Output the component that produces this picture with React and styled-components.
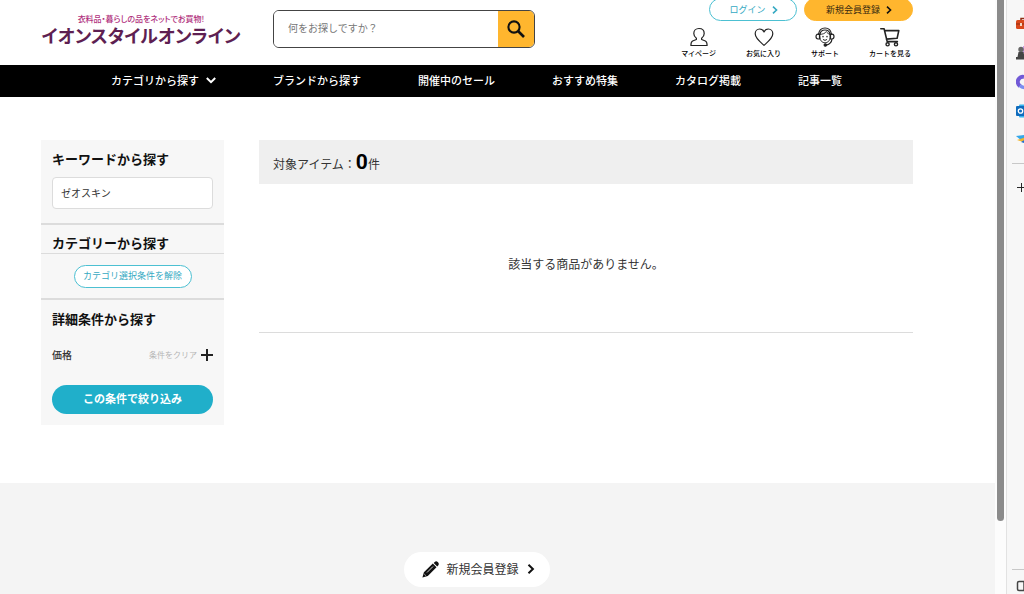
import React from "react";
import styled, { createGlobalStyle } from "styled-components";

const GlobalStyle = createGlobalStyle`
  *, *::before, *::after { box-sizing: border-box; }
  body {
    margin: 0;
    background: #fff;
    color: #333;
    font-family: "Noto Sans CJK JP", "Noto Sans", sans-serif;
    font-size: 12px;
    line-height: 18px;
  }
  button, input { font: inherit; color: inherit; }
  button { padding: 0; border: 0; background: none; cursor: pointer; }
  a { color: inherit; text-decoration: none; }
  h1, h2, p, ul { margin: 0; padding: 0; }
  svg { display: block; flex: none; }
`;

const Shell = styled.div`
  display: flex;
  height: 100vh;
  overflow: hidden;
`;

const Page = styled.div`
  flex: 1;
  min-width: 0;
  display: flex;
  flex-direction: column;
`;

const Header = styled.header`
  display: flex;
  align-items: flex-start;
  height: 65px;
  padding: 0 82px 0 41px;
`;

const Logo = styled.a`
  width: 200px;
  margin: 14px 32px 0 0;
  text-align: center;
  white-space: nowrap;
  font-feature-settings: "palt";
`;

const Tagline = styled.span`
  display: block;
  font-size: 8px;
  line-height: 10px;
  font-weight: 500;
  color: #b0307c;
`;

const Brand = styled.span`
  display: block;
  font-size: 18px;
  line-height: 22px;
  font-weight: 700;
  color: #5e1f52;
`;

const Search = styled.form`
  display: flex;
  width: 262px;
  height: 38px;
  margin-top: 10px;
  border: 1px solid #444;
  border-radius: 6px;
  overflow: hidden;
`;

const SearchInput = styled.input`
  flex: 1;
  min-width: 0;
  padding: 0 14px 2px;
  border: 0;
  outline: 0;
  font-size: 10px;
  &::placeholder { color: #777; opacity: 1; }
`;

const SearchButton = styled.button`
  display: flex;
  align-items: center;
  justify-content: center;
  width: 36px;
  background: #ffb62e;
`;

const Account = styled.div`
  display: flex;
  flex-direction: column;
  align-items: flex-end;
  margin-left: auto;
`;

const AccountButtons = styled.div`
  display: flex;
  gap: 7px;
  margin-top: -2px;
`;

const AccountLink = styled.a`
  display: flex;
  align-items: center;
  justify-content: center;
  gap: 5px;
  width: ${(p) => (p.$filled ? "109px" : "88px")};
  height: 23px;
  padding-left: 2px;
  border: 1px solid ${(p) => (p.$filled ? "#ffb62e" : "#4cc0d2")};
  border-radius: 12px;
  background: ${(p) => (p.$filled ? "#ffb62e" : "#fff")};
  color: ${(p) => (p.$filled ? "#3a2b10" : "#35a9c2")};
  font-size: 9px;
`;

const Shortcuts = styled.nav`
  display: flex;
  gap: 30px;
  margin-top: 6px;
  padding-right: 2px;
`;

const Shortcut = styled.a`
  display: flex;
  flex-direction: column;
  align-items: center;
  gap: 1px;
  font-size: 7px;
  line-height: 10px;
  font-weight: 500;
  color: #000;
`;

const GlobalNav = styled.nav`
  display: flex;
  align-items: center;
  gap: 57px;
  height: 32px;
  padding: 0 82px 2px 111px;
  background: #000;
  color: #fff;
  font-size: 11px;
  font-weight: 500;
  white-space: nowrap;
`;

const NavLink = styled.a`
  display: flex;
  align-items: center;
  gap: 7px;
`;

const Main = styled.main`
  display: flex;
  align-items: flex-start;
  gap: 35px;
  padding: 43px 82px 58px 41px;
`;

const Filters = styled.form`
  width: 183px;
  background: #f7f7f7;
`;

const FilterSection = styled.section`
  padding: 10px 11px;
  & + & { border-top: 2px solid #dcdcdc; }
`;

const CategorySection = styled(FilterSection)`
  padding: 9px 0 10px;
  text-align: center;
`;

const FilterTitle = styled.h2`
  display: block;
  font-size: 13px;
  line-height: 18px;
  font-weight: 700;
  color: #111;
  text-align: left;
`;

const RuledTitle = styled(FilterTitle)`
  margin-bottom: 11px;
  padding: 0 11px 1px;
  border-bottom: 1px solid #dcdcdc;
`;

const KeywordInput = styled.input`
  display: block;
  width: 100%;
  height: 32px;
  margin: 9px 0 4px;
  padding: 0 8px 2px;
  border: 1px solid #dcdcdc;
  border-radius: 4px;
  background: #fff;
  font-size: 10px;
`;

const ResetButton = styled.button`
  width: 118px;
  height: 23px;
  padding-bottom: 2px;
  border: 1px solid #4cc0d2;
  border-radius: 12px;
  background: #fff;
  color: #35a9c2;
  font-size: 9px;
  line-height: 18px;
  vertical-align: top;
`;

const PriceRow = styled.div`
  display: flex;
  align-items: center;
  gap: 4px;
  margin: 18px 0 21px;
  font-size: 10px;
  font-weight: 500;
`;

const ClearButton = styled.button`
  margin-left: auto;
  font-size: 8px;
  font-weight: 400;
  color: #b5b5b5;
`;

const ApplyButton = styled.button`
  display: block;
  width: 100%;
  height: 29px;
  margin-bottom: 1px;
  padding-bottom: 3px;
  border-radius: 15px;
  background: #20afca;
  color: #fff;
  font-size: 11px;
  font-weight: 700;
`;

const Results = styled.section`
  flex: 1;
  min-width: 0;
`;

const CountBar = styled.p`
  height: 44px;
  padding: 10px 14px;
  background: #efefef;
  line-height: 24px;
`;

const Count = styled.strong`
  font-family: Roboto, sans-serif;
  font-size: 21px;
  color: #000;
`;

const EmptyMessage = styled.p`
  padding: 71px 0 59px;
  border-bottom: 1px solid #dcdcdc;
  text-align: center;
`;

const Footer = styled.footer`
  flex: 1;
  display: flex;
  align-items: flex-start;
  justify-content: center;
  padding: 69px 82px 0 41px;
  background: #f4f4f4;
`;

const RegisterLink = styled.a`
  display: flex;
  align-items: center;
  justify-content: center;
  gap: 7px;
  width: 146px;
  height: 35px;
  padding: 0 0 1px 4px;
  border-radius: 18px;
  background: #fff;
`;

const ScrollTrack = styled.div`
  width: 11px;
  padding: 0 2px;
  background: #fcfcfc;
`;

const ScrollThumb = styled.div`
  height: 521px;
  max-height: 88%;
  border-radius: 0 0 4px 4px;
  background: #8b8b8b;
`;

const Rail = styled.aside`
  display: flex;
  flex-direction: column;
  width: 18px;
  padding-left: 5px;
  border-left: 1px solid #e2e2e2;
  background: #f7f7f7;
  overflow: hidden;
`;

const RailApps = styled.div`
  margin-top: -20px;
  padding-bottom: 9px;
  border-bottom: 1px solid #c8c8c8;
`;

const RailButton = styled.button`
  display: flex;
  align-items: center;
  height: 29px;
  padding-left: 4px;
`;

const RailAdd = styled(RailButton)`
  margin-top: 9px;
  padding-left: 5px;
`;

const RailFooter = styled.div`
  margin-top: auto;
  padding-top: 1px;
  border-top: 1px solid #c8c8c8;
  height: 25px;
`;

const Chevron = ({ down, color = "currentColor", size = 10, weight = 2 }) => (
  <svg width={size} height={size} viewBox="0 0 10 10" fill="none" stroke={color} strokeWidth={weight} aria-hidden="true">
    <path d={down ? "M.8 3 5 7.2 9.2 3" : "M2.500 .8 6.900 5 2.500 9.2"} />
  </svg>
);

const SearchIcon = () => (
  <svg width="18" height="18" viewBox="0 0 18 18" fill="none" stroke="#111" aria-hidden="true">
    <circle cx="7" cy="7" r="5.6" strokeWidth="2.1" />
    <path d="m11 11 6 6" strokeWidth="2.6" />
  </svg>
);

const LineIcon = ({ children }) => (
  <svg width="20" height="20" viewBox="0 0 20 20" fill="none" stroke="#222" strokeWidth="1.2" strokeLinejoin="round" strokeLinecap="round" aria-hidden="true">
    {children}
  </svg>
);

const PersonIcon = () => (
  <LineIcon>
    <path d="M7.4 11.200C5.700 10 4.800 8.300 4.800 6.400 4.800 3.500 6.800 1.500 10 1.500s5.200 2 5.200 4.900c0 1.900-.9 3.600-2.600 4.800v1.300l3.800 1.500c1.100.6 1.700 1.800 1.700 4.500H1.900c0-2.700.6-3.900 1.700-4.500l3.800-1.500z" />
  </LineIcon>
);

const HeartIcon = () => (
  <LineIcon>
    <path d="M10 18.300C6.500 15.200 1.200 11.300 1.200 6.800 1.200 4 3.200 2 5.700 2 7.600 2 9.200 3 10 5c.8-2 2.400-3 4.300-3 2.500 0 4.500 2 4.500 4.800 0 4.500-5.300 8.400-8.800 11.500z" />
  </LineIcon>
);

const SupportIcon = () => (
  <LineIcon>
    <path d="M3.500 7.300C4 3.400 6.500 1 10 1s6 2.400 6.500 6.300M5 7.500C5.300 4.700 7.200 3 10 3s4.700 1.700 5 4.500" />
    <path d="M5 7.300c3 0 5-.8 6.300-2.800.8 1.500 2 2.400 3.700 2.800v3.500c0 3-2.300 5-5 5s-5-2-5-5z" strokeWidth=".9" />
    <path d="M4.500 7.200H3C1.700 7.200 1 8.200 1 9.600S1.700 12 3 12h1.500zM15.500 7.200H17c1.300 0 2 1 2 2.400S18.300 12 17 12h-1.500zM17 12.200c-.4 3-2 5-5.500 5.900" />
    <path d="M8.200 12.500c1 1.100 2.600 1.100 3.600 0" strokeWidth="1" />
    <path d="M8 9.400v.4M12 9.400v.4" strokeWidth="1.400" />
    <circle cx="10.300" cy="18" r="1.200" fill="#222" />
  </LineIcon>
);

const CartIcon = () => (
  <LineIcon>
    <path d="M.8 1.800h3.300L7.200 14.600h10.200M4.500 3.600h14.300l-1.700 7.700-10.700.8" strokeWidth="1.600" />
    <circle cx="7.600" cy="17.300" r="1.600" strokeWidth="1.400" />
    <circle cx="16" cy="17.300" r="1.600" strokeWidth="1.400" />
  </LineIcon>
);

const PencilIcon = () => (
  <svg width="17" height="17" viewBox="0 0 17 17" fill="#111" aria-hidden="true">
    <path d="m11.700 1.900 1-1c.9-.9 2.200-.8 3 0l.5.500c.8.800.8 2.100 0 3l-1 1zM10.800 2.600l3.700 3.700-8.700 8.700L.4 16.600l1.500-5.300z" />
    <path d="m5 11.500 6-6" stroke="#fff" strokeWidth=".8" />
    <path d="m2.200 13 1.800 1.800" stroke="#fff" strokeWidth=".6" />
  </svg>
);

const PlusIcon = ({ size, weight }) => (
  <svg width={size} height={size} viewBox="0 0 12 12" fill="none" stroke="#222" strokeWidth={weight} aria-hidden="true">
    <path d="M6 0v12M0 6h12" />
  </svg>
);

const railApps = [
  { name: "Copilot", art: <path d="M4 9.500 8 12l4-3" fill="none" stroke="#7d74f0" strokeWidth="2" /> },
  {
    name: "Tools",
    art: (
      <>
        <path d="M5 5V2.500h6V5" fill="none" stroke="#8f2c12" strokeWidth="1.500" />
        <rect x="0" y="4" width="16" height="9" rx="1.500" fill="#d9481c" />
        <path d="M0 8h16" stroke="#8f2c12" />
        <rect x="4" y="7" width="2" height="3" fill="#f3d8c4" />
      </>
    ),
  },
  {
    name: "Games",
    art: (
      <>
        <path d="M7 1h7v7H7z" fill="#c79bea" />
        <circle cx="5" cy="4.500" r="2.700" fill="#666" />
        <path d="M2.500 7h5l1 5H10v2.500H0V12h1.500z" fill="#444" />
      </>
    ),
  },
  {
    name: "Microsoft 365",
    art: (
      <>
        <path d="M8 3A5 5 0 0 0 4 12" fill="none" stroke="#7159d6" strokeWidth="4" />
        <path d="M4 11.500a6 6 0 0 0 9 0" fill="none" stroke="#7b8df0" strokeWidth="3.500" />
      </>
    ),
  },
  {
    name: "Outlook",
    art: (
      <>
        <rect x="3" y="1.500" width="13" height="13" rx="1" fill="#35b2ee" />
        <rect x="0" y="3" width="9" height="10" rx="1" fill="#0f6cbd" />
        <circle cx="4.500" cy="8" r="2.200" fill="none" stroke="#fff" strokeWidth="1.300" />
      </>
    ),
  },
  {
    name: "Drop",
    art: (
      <>
        <path d="M0 4 16 2 6 9z" fill="#35a7ea" />
        <path d="m1 8 15-5-9 7z" fill="#f0b429" />
        <path d="m5 10 11-6-1 9z" fill="#1c6fd4" />
      </>
    ),
  },
];

const shortcuts = [
  { label: "マイページ", Icon: PersonIcon },
  { label: "お気に入り", Icon: HeartIcon },
  { label: "サポート", Icon: SupportIcon },
  { label: "カートを見る", Icon: CartIcon },
];

const navItems = ["ブランドから探す", "開催中のセール", "おすすめ特集", "カタログ掲載", "記事一覧"];

export default function App() {
  return (
    <Shell lang="ja">
      <GlobalStyle />
      <Page>
        <Header>
          <Logo href="#">
            <Tagline>衣料品・暮らしの品をネットでお買物!</Tagline>
            <Brand>イオンスタイルオンライン</Brand>
          </Logo>
          <Search role="search">
            <SearchInput type="text" placeholder="何をお探しですか？" aria-label="商品検索" />
            <SearchButton type="button" aria-label="検索">
              <SearchIcon />
            </SearchButton>
          </Search>
          <Account>
            <AccountButtons>
              <AccountLink href="#">
                ログイン
                <Chevron size={8} weight={2} />
              </AccountLink>
              <AccountLink href="#" $filled>
                新規会員登録
                <Chevron size={8} weight={2} color="#111" />
              </AccountLink>
            </AccountButtons>
            <Shortcuts>
              {shortcuts.map(({ label, Icon }) => (
                <Shortcut href="#" key={label}>
                  <Icon />
                  {label}
                </Shortcut>
              ))}
            </Shortcuts>
          </Account>
        </Header>

        <GlobalNav>
          <NavLink href="#">
            カテゴリから探す
            <Chevron down />
          </NavLink>
          {navItems.map((item) => (
            <NavLink href="#" key={item}>
              {item}
            </NavLink>
          ))}
        </GlobalNav>

        <Main>
          <Filters>
            <FilterSection>
              <FilterTitle as="label" htmlFor="keyword">
                キーワードから探す
              </FilterTitle>
              <KeywordInput id="keyword" type="text" defaultValue="ゼオスキン" />
            </FilterSection>
            <CategorySection>
              <RuledTitle>カテゴリーから探す</RuledTitle>
              <ResetButton type="button">カテゴリ選択条件を解除</ResetButton>
            </CategorySection>
            <FilterSection>
              <FilterTitle>詳細条件から探す</FilterTitle>
              <PriceRow>
                価格
                <ClearButton type="button">条件をクリア</ClearButton>
                <button type="button" aria-label="価格を開く">
                  <PlusIcon size={12} weight={2} />
                </button>
              </PriceRow>
              <ApplyButton type="button">この条件で絞り込み</ApplyButton>
            </FilterSection>
          </Filters>
          <Results>
            <CountBar>
              対象アイテム：<Count>0</Count>件
            </CountBar>
            <EmptyMessage>該当する商品がありません。</EmptyMessage>
          </Results>
        </Main>

        <Footer>
          <RegisterLink href="#">
            <PencilIcon />
            新規会員登録
            <Chevron color="#111" />
          </RegisterLink>
        </Footer>
      </Page>

      <ScrollTrack>
        <ScrollThumb />
      </ScrollTrack>

      <Rail>
        <RailApps>
          {railApps.map(({ name, art }) => (
            <RailButton type="button" key={name} aria-label={name}>
              <svg width="16" height="16" viewBox="0 0 16 16" aria-hidden="true">
                {art}
              </svg>
            </RailButton>
          ))}
        </RailApps>
        <RailAdd type="button" aria-label="追加">
          <PlusIcon size={9} weight={1.3} />
        </RailAdd>
        <RailFooter>
          <RailButton type="button" aria-label="サイドバー">
            <svg width="14" height="12" viewBox="0 0 14 12" fill="none" stroke="#444" strokeWidth="1.500" aria-hidden="true">
              <rect x="1.500" y="1.500" width="12" height="9" rx="1.500" />
              <path d="M8 1.500v9" />
            </svg>
          </RailButton>
        </RailFooter>
      </Rail>
    </Shell>
  );
}
